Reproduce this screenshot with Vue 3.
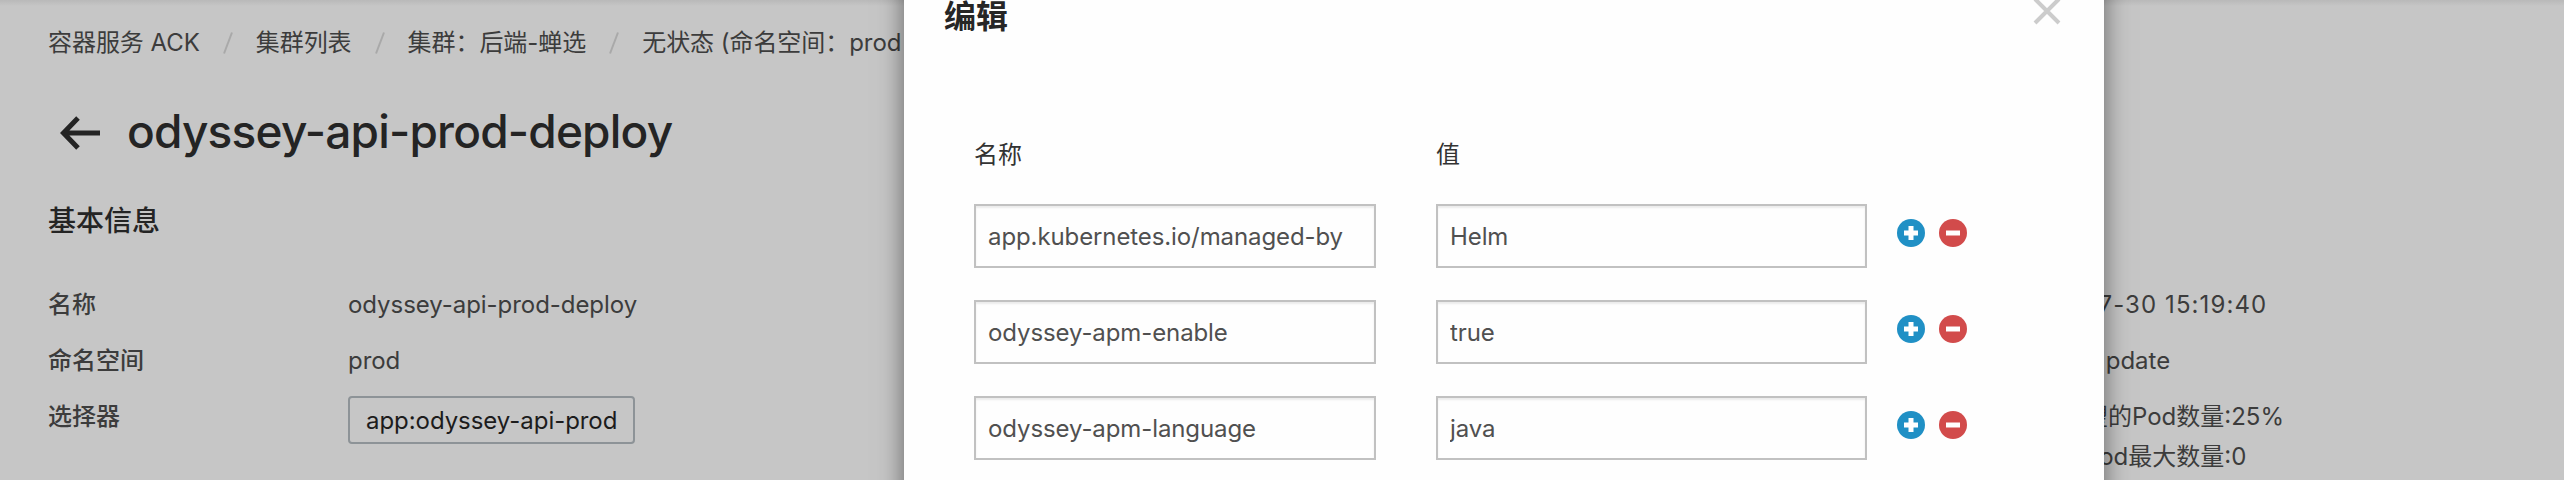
<script setup>
import { ref } from 'vue';

const crumbs = ['容器服务 ACK', '集群列表', '集群：后端-蝉选', '无状态 (命名空间：prod'];

let labels = ref([
    { key: 'app.kubernetes.io/managed-by', value: 'Helm' },
    { key: 'odyssey-apm-enable', value: 'true' },
    { key: 'odyssey-apm-language', value: 'java' },
]);
let isModalVisible = ref(true);

function addLabel(index) {
    labels.value.splice(index + 1, 0, { key: '', value: '' });
}

function removeLabel(index) {
    labels.value.splice(index, 1);
}
</script>

<template>
    <div class="page">
        <nav class="breadcrumb">
            <template v-for="(crumb, index) in crumbs" :key="crumb">
                <svg v-if="index > 0" class="slash" viewBox="0 0 10 22"><path d="M1 21.5L9 .5" /></svg>
                <span>{{ crumb }}</span>
            </template>
        </nav>
        <header class="pageTitle">
            <svg class="back" viewBox="0 0 40 34"><path d="M40 17H4M18 2L3.500 17L18 32" /></svg>
            <h1>odyssey-api-prod-deploy</h1>
        </header>
        <h2>基本信息</h2>
        <div class="info">
            <dl>
                <dt>名称</dt>
                <dd>odyssey-api-prod-deploy</dd>
                <dt>命名空间</dt>
                <dd>prod</dd>
                <dt>选择器</dt>
                <dd><span class="tag">app:odyssey-api-prod</span></dd>
            </dl>
            <div class="right">
                <p class="date">2021-07-30 15:19:40</p>
                <p>RollingUpdate</p>
                <p class="surge">超过期望的Pod数量:25%</p>
                <p>不可用Pod最大数量:0</p>
            </div>
        </div>

        <!-- Edit labels modal -->
        <section v-if="isModalVisible" class="modal">
            <header>
                <h3>编辑</h3>
                <button type="button" class="close" @click="isModalVisible = false">
                    <svg viewBox="0 0 28 28"><path d="M2 2L26 26M26 2L2 26" /></svg>
                </button>
            </header>
            <div class="labelGrid heads">
                <span>名称</span>
                <span>值</span>
            </div>
            <form @submit.prevent>
                <div v-for="(label, index) in labels" :key="index" class="labelGrid">
                    <input v-model="label.key" type="text">
                    <input v-model="label.value" type="text">
                    <div class="actions">
                        <button type="button" @click="addLabel(index)">
                            <svg viewBox="0 0 28 28">
                                <circle class="add" cx="14" cy="14" r="14" />
                                <path d="M14 7V21M7 14H21" />
                            </svg>
                        </button>
                        <button type="button" @click="removeLabel(index)">
                            <svg viewBox="0 0 28 28">
                                <circle class="remove" cx="14" cy="14" r="14" />
                                <path d="M7 14H21" />
                            </svg>
                        </button>
                    </div>
                </div>
            </form>
        </section>
    </div>
</template>

<style>
body {
    margin: 0;
    overflow: hidden;
}
</style>

<style scoped>
.page {
    position: relative;
    box-sizing: border-box;
    height: 480px;
    padding: 25px 48px 0;
    overflow: hidden;
    background: linear-gradient(#b9b9b9, #c6c6c6 6px);
    color: #3c3c3c;
    font-family: Inter, 'Noto Sans CJK SC', sans-serif;
    font-size: 24px;
    line-height: 36px;
}

h1, h2, h3, p, dl, dd {
    margin: 0;
}

svg {
    display: block;
    fill: none;
}

.breadcrumb {
    display: flex;
    align-items: center;
    letter-spacing: -0.05px;
    white-space: nowrap;
}

.slash {
    width: 10px;
    height: 22px;
    margin: 0 23px;
    stroke: #a9a9a9;
    stroke-width: 2;
}

.pageTitle {
    display: flex;
    align-items: center;
    height: 60px;
    margin-top: 40px;
    color: #242424;
}

.back {
    width: 40px;
    height: 34px;
    margin: 4px 27px 0 12px;
    stroke: #242424;
    stroke-width: 5;
}

h1 {
    font-size: 46px;
    font-weight: 500;
    letter-spacing: -0.8px;
    line-height: 60px;
}

h2 {
    margin-top: 40px;
    color: #242424;
    font-size: 28px;
    font-weight: 500;
    line-height: 40px;
}

.info {
    display: flex;
    margin-top: 46px;
}

dl {
    display: grid;
    grid-template-columns: 300px 1fr;
    grid-auto-rows: 36px;
    row-gap: 20px;
    width: 1964px;
}

dt {
    font-weight: 500;
}

dd {
    letter-spacing: -0.05px;
}

.tag {
    display: block;
    box-sizing: border-box;
    width: 287px;
    height: 48px;
    margin-top: -3px;
    padding-left: 16px;
    border: 2px solid #8d9397;
    border-radius: 4px;
    color: #1c1c1c;
    line-height: 45px;
}

.right {
    white-space: nowrap;
}

.right p {
    height: 36px;
    margin-bottom: 20px;
}

.right .surge {
    margin-bottom: 4px;
}

.date {
    letter-spacing: 1.1px;
}

.modal {
    position: absolute;
    top: -40px;
    left: 904px;
    box-sizing: border-box;
    width: 1200px;
    height: 600px;
    padding: 37px 40px 0;
    background-color: #fefefe;
    box-shadow: 0 0 24px rgba(0, 0, 0, 0.5);
    color: #333;
}

.modal header {
    display: flex;
    justify-content: space-between;
    height: 40px;
}

h3 {
    color: #262626;
    font-size: 32px;
    font-weight: 700;
    line-height: 40px;
}

button {
    display: block;
    padding: 0;
    border: 0;
    background: none;
    cursor: pointer;
}

.close {
    width: 28px;
    height: 28px;
    margin: 0 3px 0 0;
}

.close svg {
    stroke: #ccc;
    stroke-width: 4;
}

.labelGrid {
    display: grid;
    grid-template-columns: 402px 431px 70px;
    column-gap: 60px;
    margin-left: 30px;
}

.heads {
    margin-top: 100px;
}

form {
    display: grid;
    row-gap: 32px;
    margin-top: 31px;
}

input {
    box-sizing: border-box;
    width: 100%;
    height: 64px;
    padding: 0 12px;
    border: 2px solid #c1c1c1;
    border-radius: 0;
    outline: none;
    background-color: #fefefe;
    box-shadow: inset 0 2px 2px rgba(0, 0, 0, 0.075);
    color: #505050;
    font-family: inherit;
    font-size: 24px;
    letter-spacing: -0.1px;
}

.actions {
    display: flex;
    gap: 14px;
    margin: 15px 0 0 -30px;
}

.actions button {
    width: 28px;
    height: 28px;
}

.add {
    fill: #2090c5;
}

.remove {
    fill: #d24b4b;
}

.actions path {
    stroke: #fff;
    stroke-width: 5;
}
</style>
